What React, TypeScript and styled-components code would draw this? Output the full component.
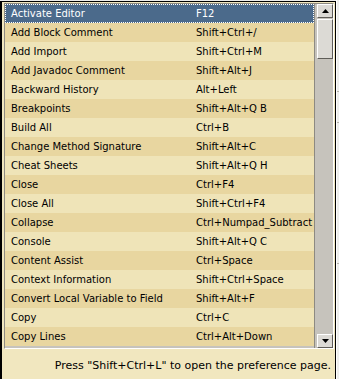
import React from "react";
import styled, { createGlobalStyle } from "styled-components";

const Global = createGlobalStyle`
  html, body { margin:0; padding:0; }
  body {
    background:#eeeeec;
    font-family:"DejaVu Sans", Verdana, sans-serif;
    font-size:11px;
  }
`

const Screen = styled.div`
  width:339px;
  height:379px;
  display:flex;
  overflow:hidden;
  background:#eeeeec;
`

const Popup = styled.div`
  box-sizing:border-box;
  width:336px;
  height:379px;
  margin-top:1px;
  border:1px solid #000;
  border-left-width:2px;
  background:#f1e7bf;
  display:flex;
  flex-direction:column;
  padding:1px 1px 0 2px;
`

const Behind = styled.div`
  flex:1;
  border-left:1px solid #fff;
  display:flex;
  flex-direction:column;
  padding-top:3px;
`

const Tick = styled.div<{ $top: number }>`
  height:1px;
  margin-top:${(p) => p.$top}px;
  background:#b9b6ae;
`

const Frame = styled.div`
  height:344px;
  display:flex;
  border:1px solid #8d8a82;
  border-right-color:#fff;
  border-bottom-color:#fff;
  background:#c6c3bc;
`

const List = styled.div`
  flex:1;
  overflow:hidden;
  border-right:1px solid #8d8a82;
  display:flex;
  flex-direction:column;
`

const Row = styled.div<{ $kind: "sel" | "dark" | "light" }>`
  height:19px;
  flex-shrink:0;
  display:grid;
  grid-template-columns:185px 1fr;
  align-items:center;
  white-space:nowrap;
  box-sizing:border-box;
  font-size:10px;
  color:${(p) => (p.$kind === "sel" ? "#fff" : "#000")};
  background:${(p) =>
    p.$kind === "sel" ? "#4b6a8b" : p.$kind === "dark" ? "#e8d6a0" : "#efe4b8"};
  outline:${(p) => (p.$kind === "sel" ? "1px dotted #fff" : "none")};
  outline-offset:-1px;
`

const Cell = styled.span`
  display:block;
  line-height:16px;
  padding-left:6px;
  overflow:hidden;
`

const Scroll = styled.div`
  width:16px;
  margin-left:2px;
  display:flex;
  flex-direction:column;
  background:#c6c3bc;
`

const ArrowBtn = styled.div`
  height:14px;
  box-sizing:border-box;
  border:1px solid #5f5d58;
  border-top-color:#fff;
  border-left-color:#fff;
  background:#dcdad5;
  display:flex;
  align-items:center;
  justify-content:center;
`

const Thumb = styled.div`
  height:40px;
  margin-top:1px;
  box-sizing:border-box;
  border:1px solid #5f5d58;
  border-top-color:#fff;
  border-left-color:#fff;
  background:#dcdad5;
`

const Track = styled.div`
  flex:1;
`

const Footer = styled.div`
  flex:1;
  display:flex;
  align-items:center;
  justify-content:flex-end;
  padding-right:3px;
  padding-top:2px;
  color:#000;
`

const Arrow = ({ down }: { down?: boolean }) => (
  <svg width="7" height="4" viewBox="0 0 7 4">
    <polygon points={down ? "0,0 7,0 3.5,4" : "0,4 7,4 3.5,0"} fill="#000" />
  </svg>
)

const bindings: [string, string][] = [
  ["Activate Editor", "F12"],
  ["Add Block Comment", "Shift+Ctrl+/"],
  ["Add Import", "Shift+Ctrl+M"],
  ["Add Javadoc Comment", "Shift+Alt+J"],
  ["Backward History", "Alt+Left"],
  ["Breakpoints", "Shift+Alt+Q B"],
  ["Build All", "Ctrl+B"],
  ["Change Method Signature", "Shift+Alt+C"],
  ["Cheat Sheets", "Shift+Alt+Q H"],
  ["Close", "Ctrl+F4"],
  ["Close All", "Shift+Ctrl+F4"],
  ["Collapse", "Ctrl+Numpad_Subtract"],
  ["Console", "Shift+Alt+Q C"],
  ["Content Assist", "Ctrl+Space"],
  ["Context Information", "Shift+Ctrl+Space"],
  ["Convert Local Variable to Field", "Shift+Alt+F"],
  ["Copy", "Ctrl+C"],
  ["Copy Lines", "Ctrl+Alt+Down"],
]

function App() {
  return (
    <Screen>
      <Global />
      <Popup>
        <Frame>
          <List>
            {bindings.map(([cmd, key], i) => (
              <Row key={cmd} $kind={i === 0 ? "sel" : i % 2 ? "dark" : "light"}>
                <Cell>{cmd}</Cell>
                <Cell>{key}</Cell>
              </Row>
            ))}
          </List>
          <Scroll>
            <ArrowBtn>
              <Arrow />
            </ArrowBtn>
            <Thumb />
            <Track />
            <ArrowBtn>
              <Arrow down />
            </ArrowBtn>
          </Scroll>
        </Frame>
        <Footer>Press "Shift+Ctrl+L" to open the preference page.</Footer>
      </Popup>
      <Behind>
        <Tick $top={88} />
        <Tick $top={30} />
        <Tick $top={140} />
      </Behind>
    </Screen>
  )
}

export default App;
